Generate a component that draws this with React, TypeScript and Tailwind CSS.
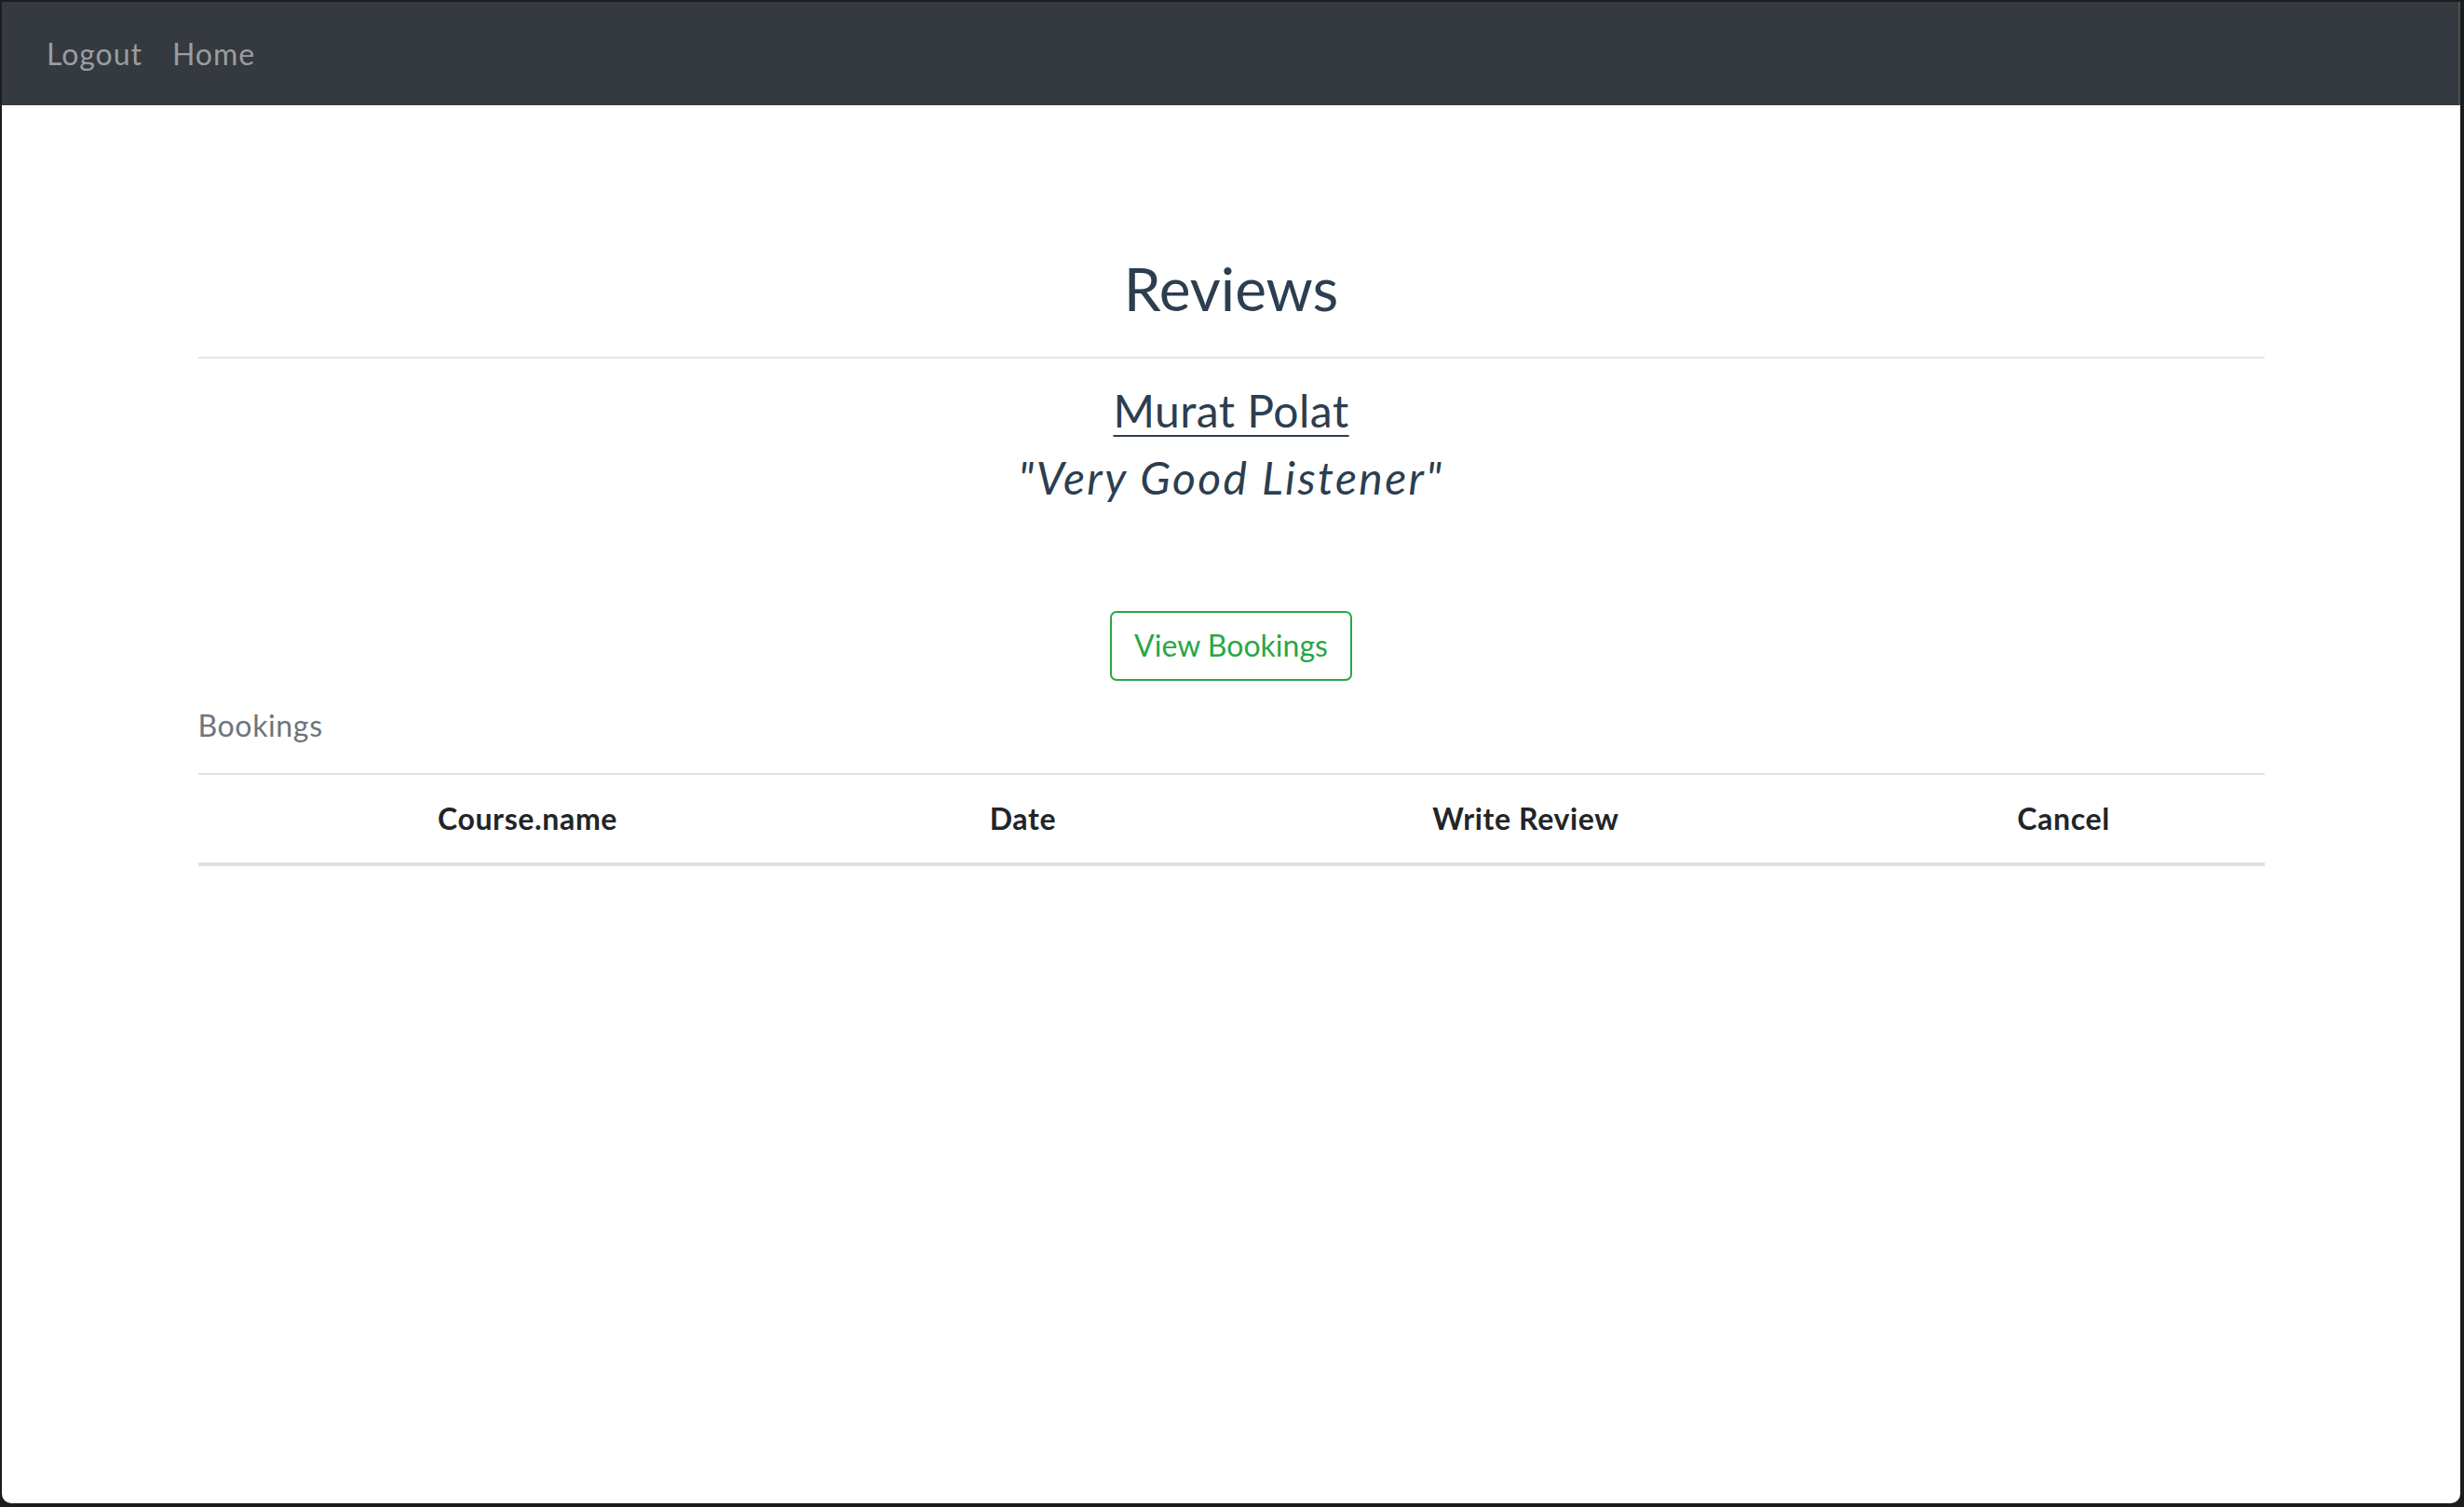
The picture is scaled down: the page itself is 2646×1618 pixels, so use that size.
import React from 'react';

const font = { fontFamily: 'Lato, "Noto Sans", sans-serif' };

export default function App() {
  const columns = [
    { label: 'Course.name', width: 'w-[708px]' },
    { label: 'Date', width: 'w-[356px]' },
    { label: 'Write Review', width: 'w-[724px]' },
    { label: 'Cancel', width: '' },
  ];

  return (
    <div className="min-h-[1618px] h-[1618px] bg-[#1c1c1c] pt-[2px] pl-[2px] pr-[4px] pb-[4px]" style={font}>
      <div className="h-full bg-white rounded-bl-[10px] rounded-br-[10px] overflow-hidden flex flex-col">
        {/* Navbar */}
        <nav className="h-[111px] bg-[#343a40] flex items-center px-[32px] shrink-0 border-r-[2px] border-[#4a4f54]">
          <a className="px-[16px] text-[32px] leading-[48px] tracking-[0.03em] text-[#9a9da0]">Logout</a>
          <a className="px-[16px] text-[32px] leading-[48px] tracking-[0.03em] text-[#9a9da0]">Home</a>
        </nav>

        {/* Content */}
        <main className="w-[2219px] mx-auto flex flex-col">
          <h2 className="mt-[159px] text-center text-[64px] leading-[1.2] text-[#2c3e50]">Reviews</h2>
          <hr className="mt-[34px] border-t-[2px] border-[#e6e6e6]" />

          <div className="mt-[27px] flex flex-col items-center text-[#2c3e50]">
            <a className="text-[48px] leading-[1.2] tracking-[0.01em] underline decoration-[2px] underline-offset-[8px]">
              Murat Polat
            </a>
            <p className="mt-[15px] text-[48px] leading-[1.2] italic tracking-[0.05em]">"Very Good Listener"</p>
          </div>

          <div className="mt-[114px] flex justify-center">
            <button className="h-[75px] px-[24px] border-[2px] border-[#28a745] rounded-[7px] text-[32px] text-[#28a745] bg-white">
              View Bookings
            </button>
          </div>

          <div className="mt-[24px] text-[32px] leading-[48px] tracking-[0.02em] text-[#6c757d]">Bookings</div>

          <table className="mt-[27px] w-full border-collapse">
            <thead>
              <tr>
                {columns.map((c) => (
                  <th
                    key={c.label}
                    className={`${c.width} border-t-[2px] border-b-[4px] border-[#dee2e6] py-[23px] text-center text-[32px] leading-[48px] font-bold tracking-[0.02em] text-[#212529]`}
                  >
                    {c.label}
                  </th>
                ))}
              </tr>
            </thead>
          </table>
        </main>
      </div>
    </div>
  );
}
